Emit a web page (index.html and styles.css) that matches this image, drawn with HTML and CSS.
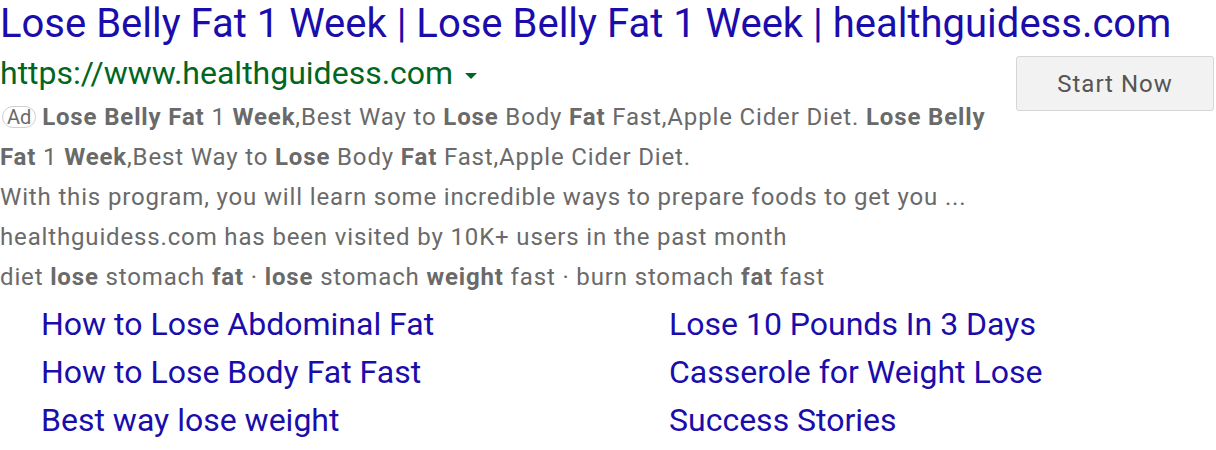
FILE: index.html
```html
<!DOCTYPE html>
<html>
<head>
<meta charset="utf-8">
<link rel="stylesheet" href="styles.css">
</head>
<body>
<div class="ad">
  <a class="title">Lose Belly Fat 1 Week | Lose Belly Fat 1 Week | healthguidess.com</a>
  <div class="main">
    <div class="body">
      <div class="url">https://www.healthguidess.com <span class="caret"></span></div>
      <div class="desc"><span class="badge">Ad</span> <b>Lose Belly Fat</b> 1 <b>Week</b>,Best Way to <b>Lose</b> Body <b>Fat</b> Fast,Apple Cider Diet. <b>Lose Belly Fat</b> 1 <b>Week</b>,Best Way to <b>Lose</b> Body <b>Fat</b> Fast,Apple Cider Diet.</div>
      <div class="line">With this program, you will learn some incredible ways to prepare foods to get you ...</div>
      <div class="line">healthguidess.com has been visited by 10K+ users in the past month</div>
      <div class="line">diet <b>lose</b> stomach <b>fat</b> · <b>lose</b> stomach <b>weight</b> fast · burn stomach <b>fat</b> fast</div>
    </div>
    <div class="cta"><span class="btn">Start Now</span></div>
  </div>
  <div class="links">
    <a>How to Lose Abdominal Fat</a>
    <a>Lose 10 Pounds In 3 Days</a>
    <a>How to Lose Body Fat Fast</a>
    <a>Casserole for Weight Lose</a>
    <a>Best way lose weight</a>
    <a>Success Stories</a>
  </div>
</div>
</body>
</html>
```

FILE: styles.css
```css
html, body { margin: 0; padding: 0; background: #fff; }
body { font-family: Roboto, "Liberation Sans", sans-serif; }
.title {
  display: block;
  color: #1a0dab;
  font-size: 40px;
  line-height: 48px;
  white-space: nowrap;
}
.main { display: flex; }
.body { width: 1000px; }
.url {
  color: #006621;
  font-size: 32px;
  line-height: 50px;
}
.caret {
  display: inline-block;
  width: 0; height: 0;
  border-left: 6px solid transparent;
  border-right: 6px solid transparent;
  border-top: 6px solid #006621;
  vertical-align: middle;
  margin-left: 4px;
}
.desc, .line {
  color: #6a6a6a;
  font-size: 24px;
  line-height: 40px;
  letter-spacing: 0.85px;
}
.desc { margin-top: -1px; }
b { color: #6a6a6a; font-weight: 700; }
.badge {
  display: inline-block;
  font-size: 20px;
  line-height: 20px;
  letter-spacing: 0;
  padding: 0 4px;
  border: 1px solid #d0d0d0;
  border-radius: 11px;
  color: #6a6a6a;
  margin-left: 2px;
  margin-right: -1px;
  vertical-align: 1px;
}
.cta { flex: 1; display: flex; justify-content: flex-end; align-items: flex-start; padding-top: 8px; padding-right: 2px; }
.btn {
  display: flex;
  align-items: center;
  justify-content: center;
  width: 198px;
  height: 55px;
  box-sizing: border-box;
  background: #f2f2f2;
  border: 1px solid #d6d6d6;
  border-radius: 3px;
  color: #555;
  font-size: 24px;
  letter-spacing: 1px;
}
.links {
  display: grid;
  grid-template-columns: 628px 1fr;
  padding-left: 41px;
  padding-top: 3px;
}
.links a {
  color: #1a0dab;
  font-size: 32px;
  line-height: 48px;
}
```
